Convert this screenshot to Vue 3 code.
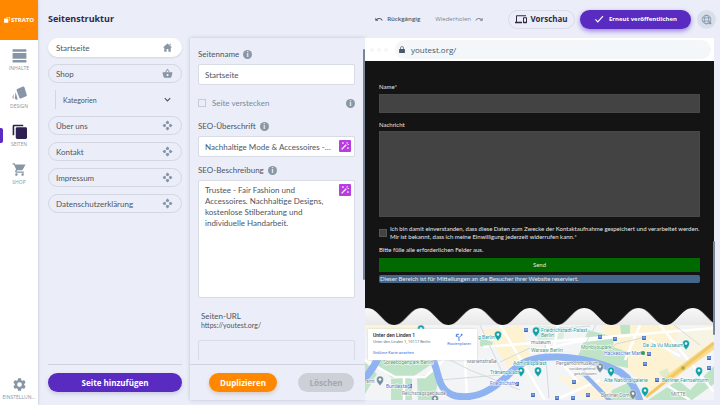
<script setup>
import { ref } from 'vue'

const nav = [
  { id: 'inhalte', label: 'INHALTE' },
  { id: 'design', label: 'DESIGN' },
  { id: 'seiten', label: 'SEITEN', active: true },
  { id: 'shop', label: 'SHOP' }
]
const pages = [
  { label: 'Startseite', icon: 'home', active: true },
  { label: 'Shop', icon: 'basket' },
  { label: 'Kategorien', icon: 'chevron', child: true },
  { label: 'Über uns', icon: 'move' },
  { label: 'Kontakt', icon: 'move' },
  { label: 'Impressum', icon: 'move' },
  { label: 'Datenschutzerklärung', icon: 'move' }
]
const name = ref('Startseite')
const hidden = ref(false)
const seoTitle = ref('Nachhaltige Mode & Accessoires - ...')
const seoText = ref('Trustee - Fair Fashion und Accessoires. Nachhaltige Designs, kostenlose Stilberatung und individuelle Handarbeit.')
const slug = ref('')

const stations = [
  [526, 330], [600, 337], [615, 339], [644, 338], [649, 354], [645, 364], [657, 380],
  [709, 358], [709, 368], [574, 382], [573, 398], [588, 395], [557, 398], [410, 386], [517, 384], [533, 395]
]
const pins = [
  { x: 498, y: 335, c: '#12a0a8' }, { x: 536, y: 331, c: '#12a0a8' }, { x: 521, y: 371, c: '#12a0a8' },
  { x: 538, y: 371, c: '#12a0a8' }, { x: 611, y: 371, c: '#12a0a8' }, { x: 645, y: 391, c: '#12a0a8' },
  { x: 686, y: 344, c: '#12a0a8' }, { x: 699, y: 371, c: '#12a0a8' }, { x: 421, y: 329, c: '#12a0a8' },
  { x: 380, y: 380, c: '#78909c' }, { x: 435, y: 399, c: '#78909c' }, { x: 600, y: 367, c: '#78909c' },
  { x: 633, y: 394, c: '#78909c' }
]
const places = [
  { x: 541, y: 332, t: 'Friedrichstadt-Palast', k: 'teal' },
  { x: 541, y: 337, t: 'Berlin', k: 'teal' },
  { x: 478, y: 339, t: 'g Berlin', k: 'teal' },
  { x: 531, y: 344, t: 'museum', k: 'grey' },
  { x: 531, y: 352, t: 'Warsaw Berlin', k: 'green' },
  { x: 581, y: 349, t: 'Monbijoupark', k: 'green' },
  { x: 604, y: 355, t: 'Hackescher Markt', k: 'blue' },
  { x: 643, y: 347, t: 'De Ja Vu Museum', k: 'teal' },
  { x: 556, y: 365, t: 'Pergamonmuseum', k: 'grey' },
  { x: 569, y: 370, t: 'vorübergehend', k: 'grey small' },
  { x: 574, y: 375, t: 'geschlossen', k: 'grey small' },
  { x: 604, y: 382, t: 'Alte Nationalgalerie', k: 'teal' },
  { x: 662, y: 382, t: 'Berliner Fernsehturm', k: 'teal' },
  { x: 671, y: 396, t: 'MITTE', k: 'grey' },
  { x: 601, y: 397, t: 'Berliner Dom', k: 'grey' },
  { x: 513, y: 365, t: 'Admiralspalast', k: 'teal' },
  { x: 490, y: 374, t: 'Tränenpalast', k: 'teal' },
  { x: 490, y: 385, t: 'Friedrichstr.', k: 'blue' },
  { x: 467, y: 363, t: 'Marienstraße', k: 'grey' },
  { x: 402, y: 395, t: 'Reichstagsgebäude', k: 'grey' },
  { x: 386, y: 388, t: 'Bundestag', k: 'blue' },
  { x: 366, y: 383, t: 'amt', k: 'grey' },
  { x: 383, y: 364, t: 'Spreebogenpark Berlin', k: 'green' }
]
</script>

<template>
  <div class="app">
    <aside class="rail">
      <a class="brand" href="#" aria-label="STRATO">
        <svg viewBox="0 0 12 12" class="brand-mark" aria-hidden="true">
          <rect x="0" y="3" width="8.6" height="8.6" rx="1.2" fill="#fff" />
          <path d="M4 0h8v8h-1.700V1.700H4z" fill="#fff" stroke="#ff8800" stroke-width=".5" />
        </svg>
        <span>STRATO</span>
      </a>
      <nav class="rail-nav">
        <a v-for="n in nav" :key="n.id" href="#" class="rail-item" :class="{ active: n.active }">
          <svg viewBox="0 0 24 24" class="rail-icon" aria-hidden="true">
            <path v-if="n.id === 'inhalte'" d="M1 2h22v4H1zM1 8h22v9H1zM1 19h22v4H1z" />
            <path v-else-if="n.id === 'design'" d="M8.300 4.600 17.500.8c1-.4 1.800 0 2.200.9l4 12.500c.3 1-.1 1.800-1 2.200l-8.700 3.500c-1 .4-2 0-2.300-1L7.300 6.700c-.3-1 .1-1.700 1-2.100zM5.600 9.500l3 10c.6 1.800.1 2.800-.9 2.500l-2.200-.8c-.6-.3-.9-1-.8-2zM2.500 12.500v8c-1.500-.5-2.200-1.500-1.700-2.800z" />
            <template v-else-if="n.id === 'seiten'">
              <path d="M1 18V3.500C1 1.800 2 1 3.500 1H18v2.600H3.600V18z" />
              <rect x="6" y="5" width="18" height="19" rx="2.300" />
            </template>
            <path v-else d="M7 18c-1.100 0-2 .9-2 2s.9 2 2 2 2-.9 2-2-.9-2-2-2zM1 2v2h2l3.600 7.600-1.350 2.450C4.520 15.370 5.480 17 7 17h12v-2H7.420c-.14 0-.25-.11-.25-.25L8.100 13h7.450c.75 0 1.410-.41 1.750-1.030L21.700 4H5.210l-.94-2zm16 16c-1.100 0-2 .9-2 2s.9 2 2 2 2-.9 2-2-.9-2-2-2z" />
          </svg>
          <span>{{ n.label }}</span>
        </a>
      </nav>
      <a href="#" class="rail-item settings">
        <svg viewBox="0 0 24 24" class="rail-icon" aria-hidden="true">
          <path fill-rule="evenodd" d="M19.430 12.980c.04-.32.07-.64.07-.98s-.03-.66-.07-.98l2.110-1.650c.19-.15.24-.42.12-.64l-2-3.460c-.12-.22-.39-.3-.61-.22l-2.490 1c-.52-.4-1.080-.73-1.690-.98l-.38-2.650C14.460 2.180 14.250 2 14 2h-4c-.25 0-.46.18-.49.42l-.38 2.650c-.61.25-1.170.59-1.690.98l-2.490-1c-.23-.09-.49 0-.61.22l-2 3.460c-.13.22-.07.49.12.64l2.110 1.650c-.04.32-.07.65-.07.98s.03.66.07.98l-2.110 1.650c-.19.15-.24.42-.12.64l2 3.460c.12.22.39.3.61.22l2.490-1c.52.4 1.080.73 1.690.98l.38 2.650c.03.24.24.42.49.42h4c.25 0 .46-.18.49-.42l.38-2.650c.61-.25 1.170-.59 1.690-.98l2.490 1c.23.09.49 0 .61-.22l2-3.460c.12-.22.07-.49-.12-.64zM12 15.800a3.800 3.800 0 1 1 0-7.600 3.800 3.800 0 0 1 0 7.600z" />
        </svg>
        <span>EINSTELLUN...</span>
      </a>
    </aside>

    <div class="main">
      <header class="topbar">
        <h1>Seitenstruktur</h1>
        <div class="actions">
          <button class="history undo" type="button">
            <svg viewBox="0 0 24 14" aria-hidden="true"><path d="M1 2v9h9L6.500 7.700c4-3.500 11-3 14.500 3.300l2-1C19 2 10.500.8 4.500 5.500z" /></svg>
            Rückgängig
          </button>
          <button class="history redo" type="button">
            Wiederholen
            <svg viewBox="0 0 24 14" aria-hidden="true"><path d="M23 2v9h-9l3.500-3.300C13.500 4.200 6.500 4.700 3 11l-2-1C5 2 13.500.8 19.500 5.500z" /></svg>
          </button>
          <button class="view-btn" type="button">
            <svg viewBox="0 0 24 18" aria-hidden="true"><path d="M4 2.500h18V.5H4C2.900.5 2 1.400 2 2.500v11H0v3h14v-3H4zM23 4.500h-6c-.6 0-1 .4-1 1v10c0 .6.400 1 1 1h6c.6 0 1-.4 1-1v-10c0-.6-.4-1-1-1zm-1 9h-4v-7h4z" /></svg>
            Vorschau
          </button>
          <button class="publish" type="button">
            <svg viewBox="0 0 12 10" aria-hidden="true"><path d="M1.500 5.500 4.500 8.500 11 1.500" fill="none" stroke="#fff" stroke-width="1.500" /></svg>
            Erneut veröffentlichen
          </button>
          <button class="globe" type="button" aria-label="Sprache">
            <svg viewBox="0 0 24 24" fill="none" stroke="#8093a8" stroke-width="1.800" aria-hidden="true">
              <circle cx="12" cy="12" r="9.500" /><ellipse cx="12" cy="12" rx="4.500" ry="9.500" /><path d="M3 8.500h18M3 15.500h18" />
              <circle cx="20" cy="20" r="2" fill="#8093a8" />
            </svg>
          </button>
        </div>
      </header>

      <div class="workspace">
        <section class="structure">
          <ul>
            <li v-for="p in pages" :key="p.label" :class="{ nested: p.child }">
              <button type="button" class="page" :class="{ active: p.active, child: p.child }">
                <span>{{ p.label }}</span>
                <svg viewBox="0 0 24 24" aria-hidden="true">
                  <path v-if="p.icon === 'home'" d="M10 21v-6h4v6h5v-9h3L12 3 2 12h3v9zM16 4h3v4l-3-3z" />
                  <path v-else-if="p.icon === 'basket'" fill-rule="evenodd" d="M17.200 9 12.800 2.400a1 1 0 0 0-1.600 0L6.800 9H2c-.6 0-1 .5-1 1l.1.300 2.500 9.200c.2.900 1 1.500 1.900 1.500h13c.9 0 1.700-.6 1.900-1.500l2.500-9.200.1-.3c0-.5-.4-1-1-1zM9 9l3-4.400L15 9zm3 9a2.500 2.500 0 1 1 0-5 2.500 2.500 0 0 1 0 5z" />
                  <path v-else-if="p.icon === 'chevron'" d="M6 9 12 15 18 9" fill="none" stroke="#4e5560" stroke-width="2.400" />
                  <path v-else d="M12 1 16 5 14 8.500h-4L8 5zM12 23 8 19l2-3.500h4l2 3.500zM1 12l4-4 3.500 2v4L5 16zM23 12l-4 4-3.500-2v-4L19 8z" />
                </svg>
              </button>
            </li>
          </ul>
          <footer>
            <button class="add" type="button">Seite hinzufügen</button>
          </footer>
        </section>

        <form class="details" @submit.prevent>
          <div class="fields">
            <div class="label-row">
              <label for="page-name">Seitenname</label>
              <i class="info">i</i>
            </div>
            <input id="page-name" v-model="name" class="field" type="text" />
            <div class="check-row">
              <input id="page-hide" v-model="hidden" type="checkbox" />
              <label for="page-hide">Seite verstecken</label>
              <i class="info">i</i>
            </div>
            <div class="label-row">
              <label for="seo-title">SEO-Überschrift</label>
              <i class="info">i</i>
            </div>
            <div class="field-wrap">
              <input id="seo-title" v-model="seoTitle" class="field with-wand" type="text" />
              <button class="wand" type="button" aria-label="Text generieren">
                <svg viewBox="0 0 12 12" aria-hidden="true"><path d="M2 10 7.500 4.500" stroke="#fff" stroke-width="1.500" /><path d="M8.500 1v2.500M10.800 4.200H9M3.500 1.500v2M2.500 2.500h2M9.500 7.500v2M8.500 8.500h2" stroke="#fff" stroke-width=".9" /></svg>
              </button>
            </div>
            <div class="label-row">
              <label for="seo-text">SEO-Beschreibung</label>
              <i class="info">i</i>
            </div>
            <div class="field-wrap">
              <textarea id="seo-text" v-model="seoText" class="field with-wand"></textarea>
              <button class="wand" type="button" aria-label="Text generieren">
                <svg viewBox="0 0 12 12" aria-hidden="true"><path d="M2 10 7.500 4.500" stroke="#fff" stroke-width="1.500" /><path d="M8.500 1v2.500M10.800 4.200H9M3.500 1.500v2M2.500 2.500h2M9.500 7.500v2M8.500 8.500h2" stroke="#fff" stroke-width=".9" /></svg>
              </button>
            </div>
            <div class="url">
              <label for="page-url">Seiten-URL</label>
              <span>https://youtest.org/</span>
            </div>
            <input id="page-url" v-model="slug" class="field blank" type="text" />
          </div>
          <footer>
            <button class="duplicate" type="button">Duplizieren</button>
            <button class="delete" type="button" disabled>Löschen</button>
          </footer>
          <div class="scroll-thumb"></div>
        </form>

        <section class="preview">
          <div class="browser">
            <span class="dots"><i></i><i></i><i></i></span>
            <div class="address">
              <svg viewBox="0 0 10 12" aria-hidden="true"><path fill-rule="evenodd" d="M1 5h1V3.500a3 3 0 0 1 6 0V5h1c.6 0 1 .4 1 1v5c0 .6-.4 1-1 1H1c-.6 0-1-.4-1-1V6c0-.6.400-1 1-1zm2.200 0h3.600V3.500a1.800 1.800 0 0 0-3.600 0z" fill="#44586d" /></svg>
              youtest.org/
            </div>
          </div>
          <form class="contact" @submit.prevent>
            <label for="c-name">Name*</label>
            <input id="c-name" class="dark" type="text" />
            <label for="c-msg">Nachricht</label>
            <textarea id="c-msg" class="dark"></textarea>
            <div class="consent">
              <input id="c-ok" type="checkbox" />
              <label for="c-ok">Ich bin damit einverstanden, dass diese Daten zum Zwecke der Kontaktaufnahme gespeichert und verarbeitet werden.<br />Mir ist bekannt, dass ich meine Einwilligung jederzeit widerrufen kann.*</label>
            </div>
            <p class="required">Bitte fülle alle erforderlichen Felder aus.</p>
            <button class="send" type="submit">Send</button>
            <p class="notice">Dieser Bereich ist für Mitteilungen an die Besucher Ihrer Website reserviert.</p>
          </form>
          <svg class="wave" viewBox="0 0 349 17" preserveAspectRatio="none" aria-hidden="true">
            <defs>
              <linearGradient id="snow" x1="0" y1="0" x2="0" y2="1"><stop offset="0" stop-color="#f8f8f8" /><stop offset="1" stop-color="#e8e8e8" /></linearGradient>
              <pattern id="crest" width="54.300" height="17" x="2" patternUnits="userSpaceOnUse">
                <rect width="55" height="17" fill="#141414" />
                <path d="M0 0C12 0 16 17 27.150 17S42.300 0 54.300 0V17H0z" fill="url(#snow)" />
              </pattern>
            </defs>
            <rect width="349" height="17" fill="url(#crest)" />
          </svg>
          <div class="map">
            <svg viewBox="365 325 349 75" preserveAspectRatio="xMidYMid slice" role="img" aria-label="Karte Berlin">
              <rect x="365" y="325" width="349" height="75" fill="#f3f4f5" />
              <g fill="#fdf3d3">
                <path d="M483 330 522 325 530 358 508 368 495 348zM600 325h80l-8 30 20 10-40 28-30-30z" />
                <path d="M555 375 610 382 620 400h-35zM365 325h60v6h-60z" opacity=".75" />
                <path d="M676 330 714 325v25l-25 18z" opacity=".5" />
              </g>
              <g fill="#bfe3c6">
                <path d="M588 330 614 337 613 347 628 352 628 368 596 362 578 357zM372 360h66l-30 20-16-2zM391 379h21v21h-21zM417 378l16-6 5 10-4 18h-16zM480 338l13 4-2 6-11-2z" />
                <path d="M620 325h10v11l-9-2zM648 400l30-20 12 10 24-24v18l-22 16zM612 390l18-8 8 18h-30zM365 362l12 12-12 20z" />
                <path d="M535 326l30 1-2 12-25 1zM659 372l8-4 3 6-7 4z" opacity=".5" />
              </g>
              <g stroke="#fff" fill="none" stroke-width="2.500">
                <path d="M365 360 395 377H425L446 358M404 376V400M465 358 467 400M483 347 714 328M500 325 545 400M546 344 578 382M555 400 600 380M640 325 625 360M660 325 714 392M530 352 575 342 640 334M558 325 552 360M680 356 650 340M668 386 690 400" />
              </g>
              <g stroke="#d5d9de" fill="none" stroke-width="1">
                <path d="M446 358 470 370 520 390M480 325 502 372M545 345 549 398M580 376 616 344 646 337M500 362 530 348M596 325 578 356M440 380 500 375M674 325 700 345M540 330 590 326" />
              </g>
              <g fill="none" stroke="#8fb2f0" stroke-linecap="round">
                <path d="M365 378C371 371 375 365 378 358" stroke-width="7" />
                <path d="M432 358C440 372 436 391 456 396 478 400 494 388 506 377 520 362 532 356 558 357 582 358 604 364 620 372 632 380 637 391 640 401" stroke-width="7" />
                <path d="M584 374C596 386 602 392 611 402" stroke-width="4" />
              </g>
              <path d="M665 381 714 345" stroke="#f8dc91" stroke-width="7" />
              <path d="M646 397 714 343" stroke="#f2c867" stroke-width="3" />
              <circle cx="683" cy="368" r="2" fill="#a9b04c" />
              <g v-for="(s, i) in stations" :key="'s' + i">
                <rect :x="s[0] - 2" :y="s[1] - 2" width="4" height="4" rx=".7" fill="#3564c4" />
                <path :d="`M${s[0] - 1} ${s[1] + 1}V${s[1] - 1}H${s[0] + 1}V${s[1] + 1}`" fill="none" stroke="#dce7ff" stroke-width=".6" />
              </g>
              <g v-for="(p, i) in pins" :key="'p' + i" :transform="`translate(${p.x} ${p.y})`">
                <path d="M0 6C-1.500 3.500-3.500 2.500-3.500-.5a3.500 3.500 0 0 1 7 0C3.500 2.500 1.500 3.500 0 6z" :fill="p.c" stroke="#fff" stroke-width=".4" />
                <circle cy="-.5" r="1.300" fill="#fff" />
              </g>
              <text v-for="(p, i) in places" :key="'t' + i" :x="p.x" :y="p.y" :class="p.k">{{ p.t }}</text>
              <circle cx="643" cy="353" r="2" fill="#3f9b45" />
            </svg>
            <div class="place-card">
              <div>
                <strong>Unter den Linden 1</strong>
                <span>Unter den Linden 1, 10117 Berlin</span>
                <a href="#">Größere Karte ansehen</a>
              </div>
              <a class="route" href="#">
                <svg viewBox="0 0 12 12" aria-hidden="true"><path d="M6 12V7L2 3M2 6V2h4M6 7l4-4" fill="none" stroke="#3d7be8" stroke-width="1.400" /><circle cx="10" cy="2.500" r="1.300" fill="#3d7be8" /></svg>
                Routenplaner
              </a>
            </div>
          </div>
          <div class="scroll-thumb"></div>
        </section>
      </div>
    </div>
  </div>
</template>

<style>
body {
  margin: 0;
}
</style>

<style scoped>
* {
  box-sizing: border-box;
}
.app {
  display: flex;
  height: 100vh;
  overflow: hidden;
  background: #ebeef8;
  color: #4e5560;
  font-family: "Open Sans", "Noto Sans", sans-serif;
  font-size: 8px;
  line-height: 10px;
}
button,
input,
textarea {
  font: inherit;
  color: inherit;
  margin: 0;
}
button {
  border: 0;
  padding: 0;
  background: none;
}
a {
  color: inherit;
  text-decoration: none;
}
p,
h1,
ul {
  margin: 0;
  padding: 0;
}
li {
  list-style: none;
}

.rail {
  display: flex;
  flex-direction: column;
  flex: none;
  width: 38px;
  background: #fff;
  box-shadow: 0 0 3px #b9bfca;
}
.brand {
  display: flex;
  align-items: center;
  justify-content: center;
  gap: 1px;
  height: 40px;
  background: #ff8800;
  color: #fff;
  font-size: 6px;
  font-weight: 700;
  line-height: 8px;
}
.brand-mark {
  width: 6px;
  height: 6px;
}
.rail-nav {
  display: flex;
  flex-direction: column;
  gap: 14px;
  padding-top: 8px;
}
.rail-item {
  position: relative;
  display: flex;
  flex-direction: column;
  align-items: center;
  gap: 1px;
  color: #8795a6;
  font-size: 5px;
  line-height: 8px;
}
.rail-icon {
  width: 15px;
  height: 15px;
  fill: currentColor;
}
.rail-item.active .rail-icon {
  fill: #2c2150;
}
.rail-item.active::before {
  content: "";
  position: absolute;
  left: 0;
  top: 4px;
  width: 3px;
  height: 15px;
  border-radius: 0 2px 2px 0;
  background: #5a2bc4;
}
.settings {
  margin-top: auto;
  padding-bottom: 4px;
}

.main {
  display: flex;
  flex-direction: column;
  flex: 1;
  min-width: 0;
}
.topbar {
  display: flex;
  align-items: center;
  justify-content: space-between;
  flex: none;
  height: 38px;
  padding: 0 4px 0 10px;
}
h1 {
  color: #2f2b45;
  font-size: 9px;
  font-weight: 700;
  line-height: 12px;
}
.actions {
  display: flex;
  align-items: center;
}
.history {
  display: flex;
  align-items: center;
  gap: 4px;
  margin-right: 15px;
  font-size: 6px;
}
.history svg {
  width: 8px;
  height: 5px;
  fill: currentColor;
}
.undo {
  font-weight: 600;
}
.redo {
  margin-right: 25px;
  color: #7d8590;
}
.view-btn {
  display: flex;
  align-items: center;
  justify-content: center;
  gap: 3px;
  width: 67px;
  height: 19px;
  margin-right: 5px;
  border: 1px solid #d9dce6;
  border-radius: 10px;
  color: #2f2b45;
  font-weight: 700;
}
.view-btn svg {
  width: 12px;
  height: 9px;
  fill: currentColor;
}
.publish {
  display: flex;
  align-items: center;
  justify-content: center;
  gap: 5px;
  width: 111px;
  height: 19px;
  margin-right: 6px;
  border-radius: 10px;
  background: #5a2bc0;
  box-shadow: 0 2px 5px #9a7ee0;
  color: #fff;
  font-size: 6px;
  font-weight: 700;
}
.publish svg {
  width: 10px;
  height: 8px;
}
.globe {
  display: grid;
  place-items: center;
  width: 19px;
  height: 19px;
  border-radius: 50%;
  background: #d9dfea;
}
.globe svg {
  width: 11px;
  height: 11px;
}

.workspace {
  display: grid;
  grid-template-columns: 152px 175px minmax(0, 1fr);
  flex: 1;
  min-height: 0;
  padding: 0 6px 5px 0;
}
.structure {
  display: flex;
  flex-direction: column;
  justify-content: space-between;
  padding: 0 8px 3px 10px;
}
.structure ul,
.fields,
.contact {
  font-family: Lato, "Open Sans", sans-serif;
}
.structure ul {
  display: flex;
  flex-direction: column;
  gap: 7px;
}
.page {
  display: flex;
  align-items: center;
  justify-content: space-between;
  width: 100%;
  height: 19px;
  padding: 0 8px 0 7px;
  border: 1px solid #d3d7e1;
  border-radius: 10px;
}
.page.active {
  border-color: #fff;
  background: #fff;
  box-shadow: 0 1px 2px #cfd4df;
}
.nested {
  padding-left: 7px;
}
.page.child {
  border: 0;
  border-left: 1px solid #d3d7e1;
  border-radius: 0;
  padding: 0 9px 0 7px;
  font-size: 7px;
}
.page svg {
  width: 11px;
  height: 11px;
  fill: #8795a6;
}
.structure footer {
  border-top: 1px solid #ced3dc;
  padding: 8px 0 5px;
}
.add {
  width: 100%;
  height: 19px;
  border-radius: 10px;
  background: #5a2bc0;
  box-shadow: 0 2px 4px #c9c8dc;
  color: #fff;
  font-weight: 700;
}

.details {
  position: relative;
  display: flex;
  flex-direction: column;
  min-height: 0;
  box-shadow: 0 0 4px #bcc3d0;
}
.fields {
  display: flex;
  flex-direction: column;
  flex: 1;
  min-height: 0;
  overflow: hidden;
  padding: 11px 10px 0 8px;
}
.label-row,
.check-row {
  display: flex;
  align-items: center;
  gap: 4px;
  flex: none;
}
.label-row {
  margin-bottom: 5px;
}
.info {
  display: grid;
  place-items: center;
  width: 9px;
  height: 9px;
  border-radius: 50%;
  background: #8a97a6;
  color: #fff;
  font-size: 7px;
  font-style: normal;
  font-weight: 700;
  line-height: 9px;
}
.field {
  display: block;
  flex: none;
  width: 100%;
  height: 21px;
  padding: 0 6px;
  border: 1px solid #d6dbe4;
  border-radius: 2px;
  background: #fff;
  outline: 0;
  text-overflow: ellipsis;
  resize: none;
}
.field.with-wand {
  padding-right: 22px;
}
textarea.field {
  height: 118px;
  padding-top: 4px;
  line-height: 11px;
  overflow: hidden;
}
.field.blank {
  background: transparent;
}
.field-wrap {
  position: relative;
  flex: none;
  margin-bottom: 8px;
}
.wand {
  position: absolute;
  top: 4px;
  right: 4px;
  display: grid;
  place-items: center;
  width: 12px;
  height: 12px;
  border-radius: 1px;
  background: #b83ce0;
}
.wand svg {
  width: 10px;
  height: 10px;
}
.check-row {
  gap: 6px;
  margin: 13px 0;
  color: #7789a0;
}
.check-row input,
.consent input {
  appearance: none;
  flex: none;
  width: 8px;
  height: 8px;
  border: 1px solid #c5ccd6;
}
.check-row .info {
  margin-left: auto;
}
.url {
  display: flex;
  flex-direction: column;
  flex: none;
  padding: 6px 3px 10px;
  line-height: 9px;
}
.url span {
  font-size: 7px;
}
.details footer {
  display: flex;
  justify-content: space-between;
  flex: none;
  margin-top: 4px;
  padding: 8px 11px 8px 19px;
  border-top: 1px solid #ced3dc;
}
.duplicate,
.delete {
  width: 68px;
  height: 19px;
  border-radius: 10px;
  background: #ff8800;
  box-shadow: 0 2px 4px #d5c9c4;
  color: #fff;
  font-weight: 700;
}
.delete {
  width: 56px;
  background: #cdd0d6;
  box-shadow: none;
  color: #a2a8b1;
}
.scroll-thumb {
  position: absolute;
  top: 11px;
  right: 0;
  width: 2px;
  height: 231px;
  border-radius: 1px;
  background: #78869b;
}

.preview {
  position: relative;
  display: flex;
  flex-direction: column;
  min-width: 0;
  background: #fff;
}
.preview .scroll-thumb {
  top: 203px;
  right: -1px;
  height: 94px;
}
.browser {
  display: flex;
  align-items: center;
  gap: 7px;
  flex: none;
  height: 23px;
  padding: 0 3px 0 5px;
}
.dots {
  display: flex;
  gap: 3px;
}
.dots i {
  width: 4px;
  height: 4px;
  border-radius: 50%;
  background: #f4f6f8;
}
.address {
  display: flex;
  align-items: center;
  gap: 6px;
  flex: 1;
  height: 19px;
  padding-left: 4px;
  border-radius: 10px;
  background: #f4f7f9;
  color: #44586d;
}
.address svg {
  width: 6px;
  height: 7px;
}
.contact {
  display: flex;
  flex-direction: column;
  flex: 1;
  min-height: 0;
  padding: 22px 14px 0;
  background: #141414;
  color: #e8e8e8;
  font-size: 6px;
  line-height: 8px;
}
.dark {
  display: block;
  flex: none;
  width: 100%;
  height: 19px;
  margin: 3px 0 8px;
  padding: 0 4px;
  border: 1px solid #484848;
  background: #434343;
  outline: 0;
  resize: none;
}
textarea.dark {
  height: 86px;
  margin-top: 2px;
}
.consent {
  display: flex;
  align-items: center;
  gap: 3px;
}
.consent input {
  border-color: #555;
  background: #434343;
}
.consent label {
  line-height: 8px;
}
.required {
  margin: 5px 0 4px;
}
.send {
  flex: none;
  height: 14px;
  background: #006900;
}
.notice {
  margin-top: 3px;
  padding: 0 1px;
  border-radius: 2px;
  background: #44668a;
}
.wave {
  display: block;
  flex: none;
  width: 100%;
  height: 17px;
}
.map {
  position: relative;
  flex: none;
  height: 75px;
}
.map > svg {
  display: block;
  width: 100%;
  height: 100%;
}
.map text {
  font-family: Roboto, sans-serif;
  font-size: 5px;
  paint-order: stroke;
  stroke: #fff;
  stroke-width: 1px;
}
.map text.small {
  font-size: 4px;
}
.teal {
  fill: #2a9aa3;
}
.green {
  fill: #4d9a6a;
}
.grey {
  fill: #7a838c;
}
.blue {
  fill: #4a78cf;
}
.place-card {
  position: absolute;
  left: 3px;
  top: 4px;
  display: flex;
  justify-content: space-between;
  width: 109px;
  height: 31px;
  padding: 3px 6px 2px 5px;
  background: #fff;
  box-shadow: 0 0 2px #ccd0d4;
  color: #6d7378;
  font-family: Roboto, sans-serif;
  font-size: 4px;
  line-height: 6px;
  white-space: nowrap;
}
.place-card div {
  display: flex;
  flex-direction: column;
  gap: 1px;
}
.place-card strong {
  color: #222;
  font-size: 5px;
  font-weight: 500;
}
.place-card a {
  margin-top: 4px;
  color: #3d74e0;
}
.place-card .route {
  display: flex;
  flex-direction: column;
  align-items: center;
  margin-top: 1px;
}
.route svg {
  width: 8px;
  height: 8px;
}
</style>
